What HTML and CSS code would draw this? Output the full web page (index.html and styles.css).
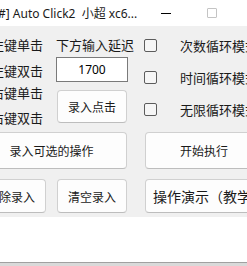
FILE: index.html
```html
<!DOCTYPE html>
<html lang="zh-CN">
<head>
    <meta charset="UTF-8">
    <meta name="viewport" content="width=device-width, initial-scale=1.0">
    <title>Auto Click2</title>
    <link rel="stylesheet" href="styles.css">
</head>
<body>
    <div class="window">
        <div class="titlebar">
            <span class="title">#] Auto Click2&nbsp;&nbsp;小超 xc6...</span>
            <span class="caption-btn"><span class="min-icon"></span></span>
            <span class="caption-btn"><span class="max-icon"></span></span>
            <span class="caption-btn"></span>
        </div>

        <div class="form">
            <div class="top">
                <div class="col-labels">
                    <div class="lbl">左键单击</div>
                    <div class="lbl lbl-2">左键双击</div>
                    <div class="lbl lbl-3">右键单击</div>
                    <div class="lbl lbl-4">右键双击</div>
                </div>
                <div class="col-delay">
                    <div class="lbl">下方输入延迟</div>
                    <input type="text" class="delay-input" value="1700">
                    <button class="btn btn-record">录入点击</button>
                </div>
                <div class="col-modes">
                    <label class="mode"><span class="check"></span>次数循环模式</label>
                    <label class="mode"><span class="check"></span>时间循环模式</label>
                    <label class="mode"><span class="check"></span>无限循环模式</label>
                </div>
            </div>

            <div class="actions">
                <button class="btn btn-wide">录入可选的操作</button>
                <button class="btn">开始执行</button>
                <button class="btn">删除录入</button>
                <button class="btn">清空录入</button>
                <button class="btn btn-left">操作演示（教学视频）</button>
            </div>
        </div>

        <div class="status"></div>
    </div>
</body>
</html>
```

FILE: styles.css
```css
html, body {
    margin: 0;
    padding: 0;
}
body {
    width: 247px;
    height: 266px;
    overflow: hidden;
    background-color: #fff;
    font-family: "Noto Sans", "Noto Sans CJK SC", sans-serif;
    color: #1a1a1a;
}
.window {
    width: 247px;
    height: 266px;
    overflow: hidden;
    display: flex;
    flex-direction: column;
}

/* title bar */
.titlebar {
    width: 281px;
    height: 26px;
    flex: none;
    display: flex;
    align-items: center;
    background-color: #fff;
}
.title {
    flex: 1;
    margin-left: -2px;
    font-size: 12px;
    white-space: nowrap;
    overflow: hidden;
    color: #1a1a1a;
}
.caption-btn {
    width: 46px;
    height: 26px;
    flex: none;
    display: flex;
    align-items: center;
    justify-content: center;
}
.min-icon {
    width: 10px;
    height: 1px;
    background-color: #000;
}
.max-icon {
    width: 8px;
    height: 8px;
    border: 1px solid #c4c4c4;
    border-radius: 1px;
}

/* form area */
.form {
    height: 191px;
    flex: none;
    background-color: #f0f0f0;
    font-family: "Noto Sans CJK SC", sans-serif;
}
.top {
    display: flex;
    padding-top: 9px;
    height: 97px;
}
.lbl {
    font-size: 13px;
    line-height: 20px;
    white-space: nowrap;
}
.col-labels {
    width: 65px;
    margin-left: -9px;
    flex: none;
}
.lbl-2 { margin-top: 6px; }
.lbl-3 { margin-top: 2px; }
.lbl-4 { margin-top: 5px; }

.col-delay {
    width: 72px;
    flex: none;
    display: flex;
    flex-direction: column;
}
.delay-input {
    box-sizing: border-box;
    width: 72px;
    height: 25px;
    margin: 2px 0 0 0;
    border: 1px solid #7a7a7a;
    background-color: #fff;
    text-align: center;
    font-family: "Noto Sans", sans-serif;
    font-size: 12px;
    color: #000;
    padding: 0;
}
.btn-record {
    width: 70px;
    height: 33px;
    margin-top: 8px;
    margin-left: 1px;
}

.col-modes {
    margin-left: 16px;
    display: flex;
    flex-direction: column;
    gap: 12px;
}
.mode {
    display: flex;
    align-items: center;
    height: 20px;
    font-size: 13px;
    white-space: nowrap;
}
.check {
    box-sizing: border-box;
    width: 13px;
    height: 13px;
    border: 1px solid #5c5c5c;
    border-radius: 2px;
    background-color: #f6f6f6;
    margin-right: 23px;
    flex: none;
}

/* buttons */
.btn {
    box-sizing: border-box;
    border: 1px solid #d0d0d0;
    border-bottom-color: #bdbdbd;
    border-radius: 4px;
    background-color: #fdfdfd;
    font-family: "Noto Sans CJK SC", sans-serif;
    font-size: 12px;
    color: #1a1a1a;
    white-space: nowrap;
    overflow: hidden;
    padding: 0;
}
.actions {
    display: grid;
    grid-template-columns: 70px 70px 125px;
    grid-template-rows: 37px 34px;
    column-gap: 11px;
    row-gap: 10px;
    margin-left: -24px;
}
.actions .btn:nth-child(2) {
    margin-left: 7px;
}
.actions .btn:nth-child(5) {
    margin-left: 7px;
}
.btn-wide {
    grid-column: span 2;
}
.btn-left {
    text-align: left;
    padding-left: 7px;
    font-size: 14px;
}

/* bottom */
.status {
    height: 45px;
    flex: none;
    background-color: #fff;
}
.window::after {
    content: "";
    display: block;
    height: 4px;
    background: linear-gradient(#a0a0a0 0, #a0a0a0 1px, #d9d9d9 1px);
    flex: none;
}
```
